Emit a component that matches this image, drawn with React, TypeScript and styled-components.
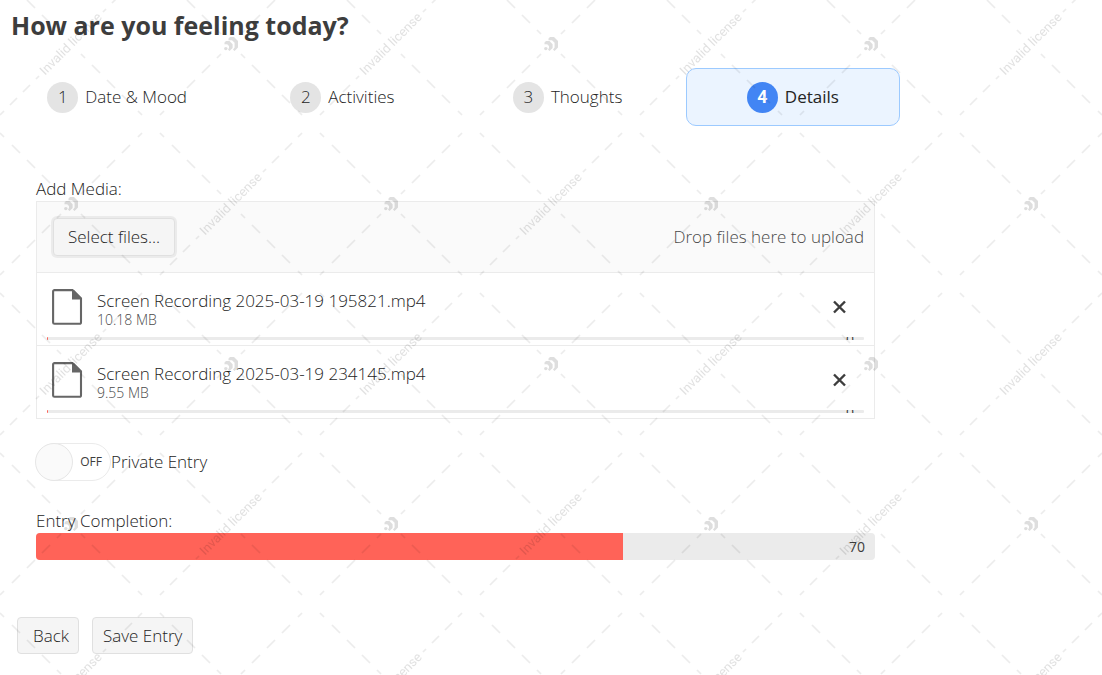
import React, { useState } from "react";
import styled, { createGlobalStyle } from "styled-components";

const GlobalStyle = createGlobalStyle`
  *, *::before, *::after { box-sizing: border-box; }
  body {
    margin: 0;
    background: #ffffff;
    color: #242424;
    font-family: "Open Sans", "Noto Sans", sans-serif;
    font-size: 17px;
    font-weight: 300;
    line-height: 24px;
  }
  button, input { font: inherit; color: inherit; }
`;

const Page = styled.main`
  max-width: 910px;
  padding: 8px 10px 20px;
`;

const Title = styled.h1`
  margin: 0 0 26px 1px;
  color: #3d3d3d;
  font-size: 25px;
  line-height: 34px;
  font-weight: 700;
`;

const Steps = styled.ol`
  display: grid;
  grid-template-columns: repeat(4, 1fr);
  gap: 11px;
  margin: 0;
  padding: 0;
  list-style: none;
`;

const Step = styled.button<{ $active: boolean }>`
  display: flex;
  align-items: center;
  justify-content: center;
  gap: 7px;
  width: 100%;
  height: 58px;
  padding: 0;
  border: 1px solid ${(p) => (p.$active ? "#9ccaff" : "transparent")};
  border-radius: 10px;
  background: ${(p) => (p.$active ? "#ebf4ff" : "transparent")};
  font-weight: ${(p) => (p.$active ? 500 : 300)};
  cursor: pointer;
`;

const StepNumber = styled.span<{ $active: boolean }>`
  display: flex;
  align-items: center;
  justify-content: center;
  width: 31px;
  height: 31px;
  border-radius: 50%;
  background: ${(p) => (p.$active ? "#4285f4" : "#e4e4e4")};
  color: ${(p) => (p.$active ? "#ffffff" : "#242424")};
  font-weight: ${(p) => (p.$active ? 700 : 300)};
`;

const Form = styled.form`
  margin: 0;
`;

const Fields = styled.div`
  padding: 51px 25px 0 26px;
`;

const FieldLabel = styled.label`
  display: block;
`;

const Upload = styled.section`
  border: 1px solid #ebebeb;
`;

const DropZone = styled.div`
  display: flex;
  align-items: center;
  justify-content: space-between;
  padding: 16px 10px 16px 16px;
  border-bottom: 1px solid #ebebeb;
  background: #fafafa;
  color: #4a4a4a;
`;

const Button = styled.button<{ $focused?: boolean; $indent?: boolean }>`
  height: ${(p) => (p.$focused ? 38 : 37)}px;
  padding: 0 ${(p) => (p.$focused ? 14 : p.$indent ? 9 : 10)}px;
  padding-left: ${(p) => (p.$indent ? 15 : p.$focused ? 14 : 10)}px;
  border: 1px solid #e0e0e0;
  border-radius: 4px;
  background: #f5f5f5;
  box-shadow: ${(p) => (p.$focused ? "0 0 0 2px rgba(0, 0, 0, 0.06)" : "none")};
  color: #242424;
  cursor: pointer;
`;

const FileList = styled.ul`
  margin: 0;
  padding: 0;
  list-style: none;
`;

const FileItem = styled.li`
  padding: 14px 10px 5px;
  & + & { border-top: 1px solid #ebebeb; }
`;

const FileInfo = styled.div`
  display: flex;
  align-items: center;
  padding: 0 16px 0 5px;
  margin-bottom: 10px;
`;

const FileText = styled.div`
  flex: 1;
  margin-left: 14px;
  padding-top: 3px;
`;

const FileName = styled.div`
  line-height: 22px;
`;

const FileSize = styled.div`
  color: #4a4a4a;
  font-size: 14px;
  line-height: 15px;
`;

const RemoveButton = styled.button`
  display: flex;
  padding: 0;
  border: 0;
  background: none;
  cursor: pointer;
`;

const Bar = styled.div<{ $thin?: boolean }>`
  display: flex;
  position: relative;
  height: ${(p) => (p.$thin ? 3 : 27)}px;
  border-radius: ${(p) => (p.$thin ? 1 : 4)}px;
  background: #ebebeb;
  overflow: hidden;
`;

const BarFill = styled.div`
  min-width: 1px;
  background: #ff6358;
`;

const BarValue = styled.span`
  position: absolute;
  inset: 0 10px 0 auto;
  display: flex;
  align-items: center;
  color: #3d3d3d;
  font-size: 14px;
  font-weight: 400;
`;

const SwitchRow = styled.label`
  display: flex;
  align-items: center;
  width: fit-content;
  margin: 24px 0 28px;
  cursor: pointer;
`;

const SwitchInput = styled.input`
  position: absolute;
  opacity: 0;
`;

const SwitchTrack = styled.span<{ $on: boolean }>`
  display: flex;
  flex-direction: ${(p) => (p.$on ? "row-reverse" : "row")};
  align-items: center;
  justify-content: space-between;
  width: 75px;
  height: 38px;
  padding: 0 8px 0 0;
  border: 1px solid #ebebeb;
  border-radius: 19px;
  background: #ffffff;
  color: #3d3d3d;
  font-size: 12px;
  font-weight: 400;
`;

const SwitchThumb = styled.span`
  width: 38px;
  height: 38px;
  margin-left: -2px;
  border: 1px solid #e6e6e6;
  border-radius: 50%;
  background: #fafafa;
`;

const Actions = styled.div`
  display: flex;
  gap: 13px;
  padding: 57px 7px 0;
`;

const WatermarkLayer = styled.svg`
  position: fixed;
  inset: 0;
  width: 100%;
  height: 100%;
  pointer-events: none;
`;

const files = [
  { name: "Screen Recording 2025-03-19 195821.mp4", size: "10.18 MB" },
  { name: "Screen Recording 2025-03-19 234145.mp4", size: "9.55 MB" },
];

const steps = ["Date & Mood", "Activities", "Thoughts", "Details"];

const FileIcon = () => (
  <svg width="31" height="36" viewBox="0 0 31 36" aria-hidden="true">
    <path
      d="M2.5 1.1H20.5L29 9.6V33.4a1.4 1.4 0 0 1-1.4 1.4H2.5A1.4 1.4 0 0 1 1.1 33.4V2.5A1.4 1.4 0 0 1 2.5 1.1Z"
      fill="none"
      stroke="#666666"
      strokeWidth="2.1"
    />
    <path d="M20 1H22L30 9V10.5H20Z" fill="#666666" />
  </svg>
);

const CloseIcon = () => (
  <svg width="18" height="18" viewBox="0 0 18 18" aria-hidden="true">
    <path d="M4 3.5L15 14.5M15 3.5L4 14.5" stroke="#3d3d3d" strokeWidth="2.4" />
  </svg>
);

type Dash = [number, number];
const plainDashes: Dash[] = [[10, 14], [21, 29], [36, 44], [51, 59], [67, 71]];
const captionDashes: Dash[] = [[32, 35], [41, 48], [54, 61], [67, 71]];

const ray = (dashes: Dash[], sx: number, sy: number) =>
  dashes.map(([a, b]) => `M${a * sx} ${a * sy}L${b * sx} ${b * sy}`).join("");

const logoRays =
  ray(plainDashes, 1, 1) + ray(plainDashes, -1, -1) + ray(plainDashes, 1, -1) + ray(plainDashes, -1, 1);
const captionRays =
  ray(plainDashes, 1, 1) + ray(plainDashes, -1, -1) + ray(captionDashes, 1, -1) + ray(captionDashes, -1, 1);

const LogoMark = ({ x, y }: { x: number; y: number }) => (
  <g transform={`translate(${x} ${y})`}>
    <path d={logoRays} stroke="#000000" strokeOpacity="0.075" strokeWidth="1.7" />
    <g fill="#000000" fillOpacity="0.13">
      <path d="M-2.5 -5.5L-1 -7H3L7 -3V3.5L3.5 7L2 5.5L3.6 3.5V-1.2L1 -3.8H-2.5Z" />
      <path d="M-6.5 -1.5L-5 -3H-1.5L1.6 0.2V4L-1.5 7L-3 5.4L-2 4V2L-3.8 0.2H-6.5Z" />
      <circle cx="-5.2" cy="4.6" r="1.7" />
    </g>
  </g>
);

const Caption = ({ x, y }: { x: number; y: number }) => (
  <g transform={`translate(${x} ${y})`}>
    <path d={captionRays} stroke="#000000" strokeOpacity="0.075" strokeWidth="1.7" />
    <text
      transform="rotate(-45)"
      y="4"
      textAnchor="middle"
      fontFamily="Roboto, sans-serif"
      fontSize="13"
      fontWeight="400"
      fill="#000000"
      fillOpacity="0.12"
    >
      Invalid license
    </text>
  </g>
);

const Watermark = () => (
  <WatermarkLayer aria-hidden="true">
    <defs>
      <pattern id="license" x="-9" y="-36" width="320" height="320" patternUnits="userSpaceOnUse">
        <Caption x={80} y={80} />
        <LogoMark x={240} y={80} />
        <LogoMark x={80} y={240} />
        <Caption x={240} y={240} />
      </pattern>
    </defs>
    <rect width="100%" height="100%" fill="url(#license)" />
  </WatermarkLayer>
);

export default function App() {
  const [active, setActive] = useState(3);
  const [isPrivate, setIsPrivate] = useState(false);
  const [queue, setQueue] = useState(files);
  const completion = 70;

  return (
    <>
      <GlobalStyle />
      <Page>
        <Title>How are you feeling today?</Title>
        <Steps>
          {steps.map((label, i) => (
            <li key={label}>
              <Step type="button" $active={i === active} onClick={() => setActive(i)}>
                <StepNumber $active={i === active}>{i + 1}</StepNumber>
                {label}
              </Step>
            </li>
          ))}
        </Steps>
        <Form onSubmit={(e) => e.preventDefault()}>
          <Fields>
            <FieldLabel htmlFor="media">Add Media:</FieldLabel>
            <Upload>
              <DropZone>
                <Button id="media" type="button" $focused>Select files...</Button>
                <span>Drop files here to upload</span>
              </DropZone>
              <FileList>
                {queue.map((file) => (
                  <FileItem key={file.name}>
                    <FileInfo>
                      <FileIcon />
                      <FileText>
                        <FileName>{file.name}</FileName>
                        <FileSize>{file.size}</FileSize>
                      </FileText>
                      <RemoveButton
                        type="button"
                        aria-label={`Remove ${file.name}`}
                        onClick={() => setQueue(queue.filter((f) => f !== file))}
                      >
                        <CloseIcon />
                      </RemoveButton>
                    </FileInfo>
                    <Bar $thin role="progressbar" aria-label="Upload progress" aria-valuenow={0}>
                      <BarFill style={{ width: "0%" }} />
                      <BarValue>0</BarValue>
                    </Bar>
                  </FileItem>
                ))}
              </FileList>
            </Upload>
            <SwitchRow>
              <SwitchInput
                type="checkbox"
                role="switch"
                checked={isPrivate}
                onChange={(e) => setIsPrivate(e.target.checked)}
              />
              <SwitchTrack $on={isPrivate}>
                <SwitchThumb />
                {isPrivate ? "ON" : "OFF"}
              </SwitchTrack>
              Private Entry
            </SwitchRow>
            <FieldLabel as="div" id="completion">Entry Completion:</FieldLabel>
            <Bar role="progressbar" aria-labelledby="completion" aria-valuenow={completion}>
              <BarFill style={{ width: `${completion}%` }} />
              <BarValue>{completion}</BarValue>
            </Bar>
          </Fields>
          <Actions>
            <Button type="button" $indent>Back</Button>
            <Button type="submit">Save Entry</Button>
          </Actions>
        </Form>
      </Page>
      <Watermark />
    </>
  );
}
